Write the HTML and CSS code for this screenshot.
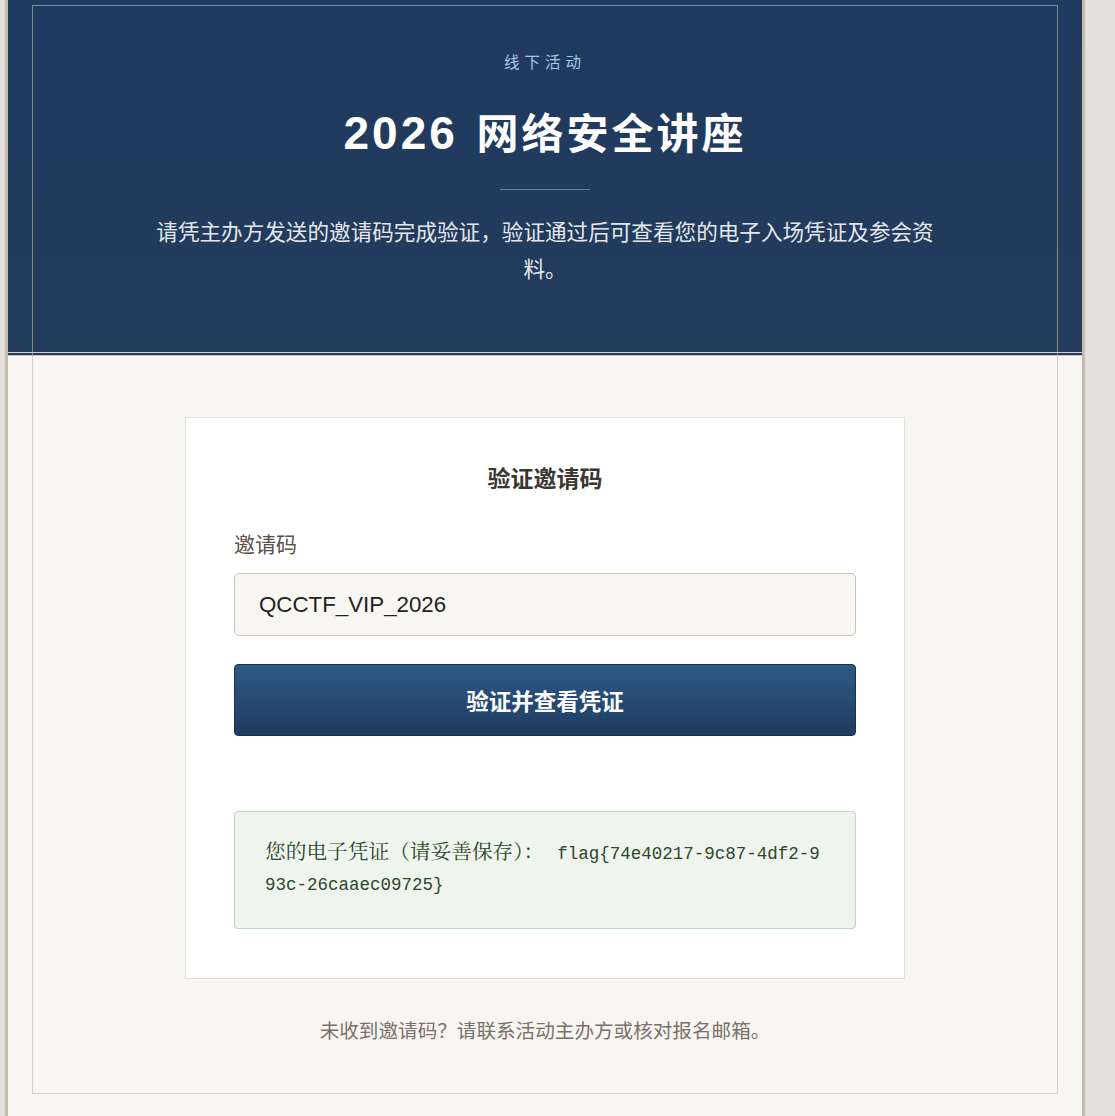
FILE: index.html
```html
<!DOCTYPE html>
<html lang="zh-CN">
<head>
<meta charset="utf-8">
<title>2026 网络安全讲座</title>
<link rel="stylesheet" href="styles.css">
</head>
<body>
<div class="page">
  <div class="frame"></div>
  <header class="hero">
    <p class="eyebrow">线下活动</p>
    <h1 class="title"><span class="year">2026</span> 网络安全讲座</h1>
    <div class="rule"></div>
    <p class="lead">请凭主办方发送的邀请码完成验证，验证通过后可查看您的电子入场凭证及参会资料。</p>
  </header>
  <main class="content">
    <section class="card">
      <h2 class="card-title">验证邀请码</h2>
      <label class="label" for="code">邀请码</label>
      <input class="input" id="code" type="text" value="QCCTF_VIP_2026">
      <button class="btn" type="button">验证并查看凭证</button>
      <div class="result"><span class="result-label">您的电子凭证（请妥善保存）：</span>flag{74e40217-9c87-4df2-993c-26caaec09725}</div>
    </section>
    <p class="note">未收到邀请码？请联系活动主办方或核对报名邮箱。</p>
  </main>
</div>
</body>
</html>
```
FILE: styles.css
```css
* { box-sizing: border-box; }
html, body { margin: 0; padding: 0; }
body {
  background: #e3e0db;
  font-family: "Liberation Sans", "Noto Sans CJK SC", sans-serif;
  overflow: hidden;
}
.page {
  position: relative;
  margin-left: 5px;
  width: 1080px;
  height: 1116px;
  border-left: 3px solid #c6baab;
  border-right: 3px solid #c6baab;
  background: #f8f6f2;
}
.frame {
  position: absolute;
  left: 24px;
  right: 24px;
  top: 5px;
  height: 1089px;
  border: 1px solid rgba(190, 182, 172, 0.62);
  z-index: 2;
  pointer-events: none;
}
.hero {
  background: linear-gradient(#1f3a5f, #243c5c);
  padding: 52px 0 64px;
  text-align: center;
  box-shadow: 0 1px 0 #d2cec8, 0 3px 0 #223a5c, 0 4px 0 #cfc5b8;
}
.eyebrow {
  margin: 0;
  font-size: 15.5px;
  line-height: 22px;
  letter-spacing: 5px;
  color: #a9c6e6;
}
.title {
  margin: 34px 0 0;
  font-size: 42px;
  line-height: 50px;
  font-weight: bold;
  letter-spacing: 3px;
  word-spacing: 4px;
  color: #ffffff;
}
.year {
  font-size: 46px;
  line-height: 50px;
}
.rule {
  width: 90px;
  height: 1px;
  margin: 29px auto 0;
  background: rgba(255, 255, 255, 0.35);
}
.lead {
  max-width: 790px;
  margin: 24px auto 0;
  font-size: 21.6px;
  line-height: 37px;
  color: rgba(255, 255, 255, 0.9);
}
.content {
  padding-top: 65px;
}
.card {
  width: 720px;
  margin: 0 auto;
  background: #ffffff;
  border: 1px solid #e2ddd5;
  padding: 45px 48px 49px;
  display: flex;
  flex-direction: column;
}
.card-title {
  margin: 0;
  text-align: center;
  font-size: 23px;
  line-height: 32px;
  font-weight: bold;
  color: #3b3632;
}
.label {
  margin-top: 36px;
  font-size: 21px;
  line-height: 28px;
  color: #5a524b;
}
.input {
  margin-top: 14px;
  height: 63px;
  width: 100%;
  padding: 0 24px;
  background: #f8f6f2;
  border: 1px solid #cbc1b4;
  border-radius: 5px;
  font-family: "Liberation Sans", sans-serif;
  font-size: 22.3px;
  color: #222222;
  outline: none;
}
.btn {
  margin-top: 28px;
  height: 72px;
  width: 100%;
  background: linear-gradient(#2e5a86, #1f3b60);
  border: 1px solid #1b304f;
  border-radius: 4px;
  color: #ffffff;
  font-family: "Liberation Sans", "Noto Sans CJK SC", sans-serif;
  font-size: 22.5px;
  font-weight: bold;
}
.result {
  margin-top: 75px;
  padding: 27px 30px;
  background: #eff5ee;
  border: 1px solid #bdd6c1;
  border-radius: 4px;
  font-family: "Liberation Mono", "Noto Sans CJK SC", monospace;
  font-size: 17.5px;
  line-height: 31px;
  color: #2b4729;
  word-break: break-all;
}
.result-label {
  font-family: "Noto Serif CJK SC", "Noto Sans CJK SC", serif;
  font-size: 20.7px;
  line-height: 20px;
  padding-right: 13px;
}
.note {
  margin: 37px 0 0;
  text-align: center;
  font-size: 19.6px;
  line-height: 30px;
  color: #7b7067;
}
```
